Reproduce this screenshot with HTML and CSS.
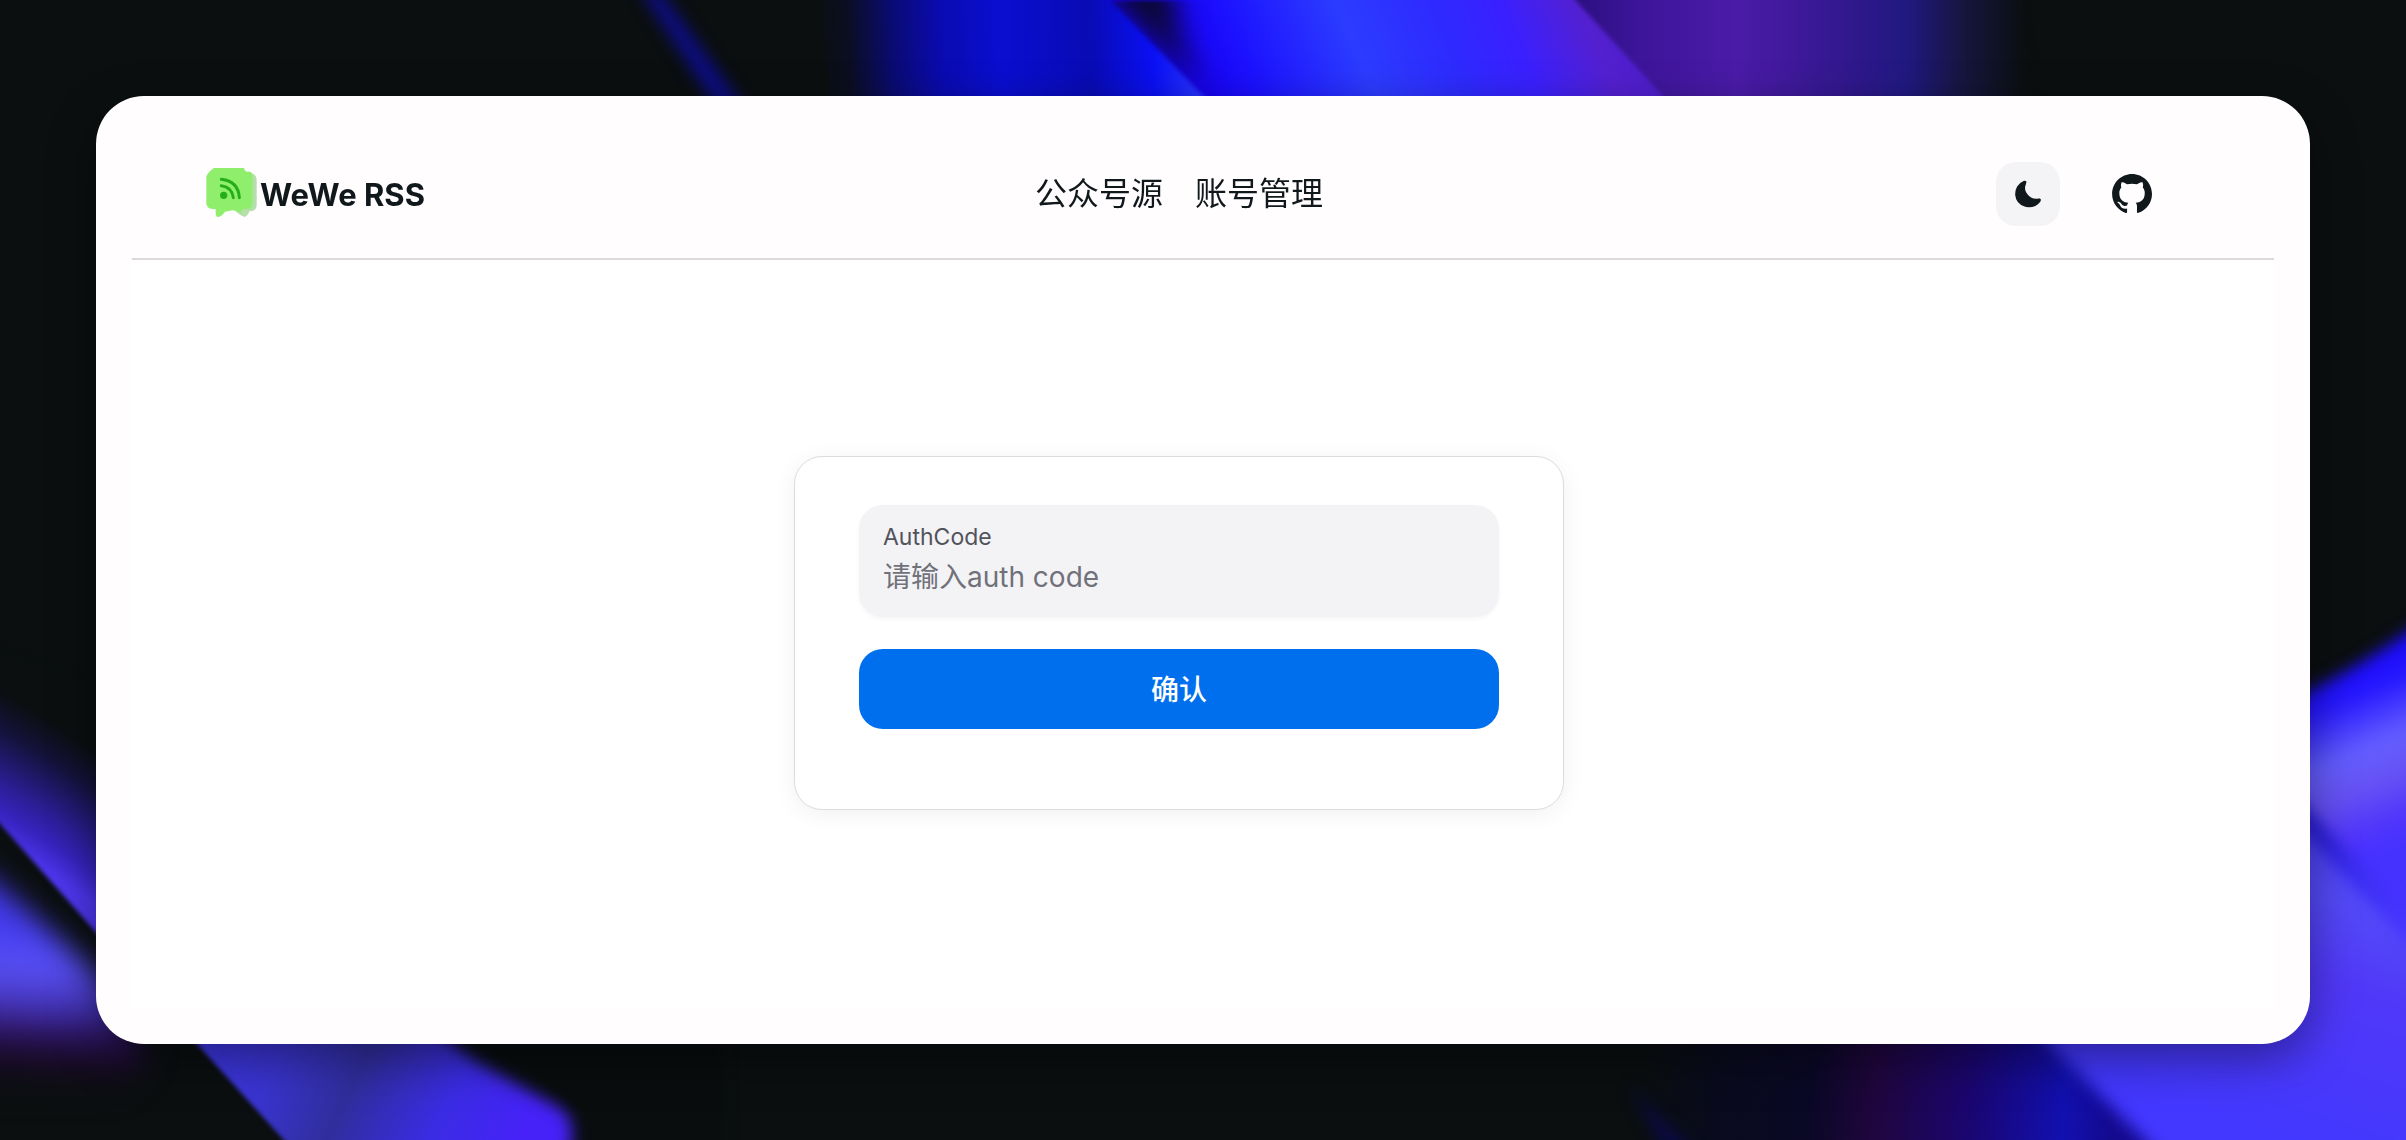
FILE: index.html
```
<!DOCTYPE html>
<html lang="zh-CN">
<head>
    <meta charset="UTF-8">
    <meta name="viewport" content="width=device-width, initial-scale=1.0">
    <title>WeWe RSS</title>
    <link rel="stylesheet" href="styles.css">
</head>
<body>

    <svg class="wallpaper" viewBox="0 0 2406 1140" preserveAspectRatio="xMidYMid slice" color-interpolation-filters="sRGB" aria-hidden="true">
        <defs>
            <filter id="soft2" x="-20%" y="-20%" width="140%" height="140%"><feGaussianBlur stdDeviation="2"/></filter>
            <filter id="soft8" x="-50%" y="-50%" width="200%" height="200%"><feGaussianBlur stdDeviation="8"/></filter>
            <filter id="soft14" x="-80%" y="-80%" width="260%" height="260%"><feGaussianBlur stdDeviation="14"/></filter>

            <linearGradient id="beamA" gradientUnits="userSpaceOnUse" x1="815" y1="20" x2="1205" y2="0">
                <stop offset="0" stop-color="#0b0f10"/>
                <stop offset="0.08" stop-color="#0b0e20"/>
                <stop offset="0.2" stop-color="#0a0b74"/>
                <stop offset="0.32" stop-color="#0a0bb0"/>
                <stop offset="0.47" stop-color="#0a0ed0"/>
                <stop offset="0.7" stop-color="#090bb4"/>
                <stop offset="0.86" stop-color="#0a10f4"/>
                <stop offset="1" stop-color="#2f3cff"/>
            </linearGradient>
            <linearGradient id="beamB" gradientUnits="userSpaceOnUse" x1="1170" y1="50" x2="1650" y2="-150">
                <stop offset="0" stop-color="#1800f0"/>
                <stop offset="0.12" stop-color="#1b10ff"/>
                <stop offset="0.33" stop-color="#2c3cff"/>
                <stop offset="0.5" stop-color="#2e2aff"/>
                <stop offset="0.62" stop-color="#3a20ff"/>
                <stop offset="0.76" stop-color="#5420d0"/>
                <stop offset="1" stop-color="#401cc8"/>
            </linearGradient>
            <linearGradient id="beamC" gradientUnits="userSpaceOnUse" x1="1575" y1="0" x2="2025" y2="0">
                <stop offset="0" stop-color="#2c0f80"/>
                <stop offset="0.14" stop-color="#3c159a"/>
                <stop offset="0.36" stop-color="#4b1ba8"/>
                <stop offset="0.58" stop-color="#341890"/>
                <stop offset="0.74" stop-color="#201980"/>
                <stop offset="0.86" stop-color="#161640"/>
                <stop offset="1" stop-color="#0b0f10"/>
            </linearGradient>
            <linearGradient id="leftUpper" gradientUnits="userSpaceOnUse" x1="80" y1="740" x2="10" y2="850">
                <stop offset="0" stop-color="#0b0f10"/>
                <stop offset="0.25" stop-color="#14123a"/>
                <stop offset="0.6" stop-color="#2a1e94"/>
                <stop offset="0.8" stop-color="#3624c0"/>
                <stop offset="1" stop-color="#4e36ee"/>
            </linearGradient>
            <linearGradient id="leftLower" gradientUnits="userSpaceOnUse" x1="30" y1="870" x2="20" y2="1085">
                <stop offset="0" stop-color="#3a30d8"/>
                <stop offset="0.28" stop-color="#463cf0"/>
                <stop offset="0.45" stop-color="#5850f4"/>
                <stop offset="0.63" stop-color="#4434b8"/>
                <stop offset="0.76" stop-color="#2a125c"/>
                <stop offset="0.88" stop-color="#180a24"/>
                <stop offset="1" stop-color="#0b0f10"/>
            </linearGradient>
            <linearGradient id="leftBottom" gradientUnits="userSpaceOnUse" x1="210" y1="1040" x2="500" y2="1180">
                <stop offset="0" stop-color="#3d36e4"/>
                <stop offset="0.22" stop-color="#3a34d0"/>
                <stop offset="0.46" stop-color="#302e9c"/>
                <stop offset="0.75" stop-color="#3a2ce4"/>
                <stop offset="1" stop-color="#4622f8"/>
            </linearGradient>
            <linearGradient id="rightUpper" gradientUnits="userSpaceOnUse" x1="2325" y1="660" x2="2400" y2="840">
                <stop offset="0" stop-color="#1806f8"/>
                <stop offset="0.22" stop-color="#2416ff"/>
                <stop offset="0.5" stop-color="#645eff"/>
                <stop offset="0.68" stop-color="#6652f4"/>
                <stop offset="0.88" stop-color="#5236fa"/>
                <stop offset="1" stop-color="#4632ff"/>
            </linearGradient>
            <linearGradient id="rightLower" gradientUnits="userSpaceOnUse" x1="2360" y1="840" x2="2260" y2="1140">
                <stop offset="0" stop-color="#4a40f0"/>
                <stop offset="0.2" stop-color="#544af8"/>
                <stop offset="0.45" stop-color="#5038f8"/>
                <stop offset="1" stop-color="#4238ff"/>
            </linearGradient>
            <linearGradient id="bottomDark" gradientUnits="userSpaceOnUse" x1="1640" y1="1100" x2="2110" y2="1130">
                <stop offset="0" stop-color="#0b0f10"/>
                <stop offset="0.15" stop-color="#090b1c"/>
                <stop offset="0.36" stop-color="#0a0826"/>
                <stop offset="0.5" stop-color="#20063e"/>
                <stop offset="0.7" stop-color="#1a0670"/>
                <stop offset="0.9" stop-color="#1210b0"/>
                <stop offset="1" stop-color="#140a90"/>
            </linearGradient>
            <linearGradient id="fold" gradientUnits="userSpaceOnUse" x1="2310" y1="820" x2="2400" y2="930">
                <stop offset="0" stop-color="#1c14c8"/>
                <stop offset="0.5" stop-color="#3a2cee"/>
                <stop offset="1" stop-color="#4636ff"/>
            </linearGradient>
            <clipPath id="clipB"><path d="M1110 0H1575L1700 136H1242Z"/></clipPath>
        </defs>

        <rect width="2406" height="1140" fill="#0b0f10"/>

        <!-- top beams -->
        <path d="M640 -10L660 -10L750 116L722 116Z" fill="#0d0d84" filter="url(#soft8)"/>
        <path d="M815 -20H1400V140H835Z" fill="url(#beamA)"/>
        <g filter="url(#soft2)">
            <path d="M1091 -20H1700L1800 136H1242Z" fill="url(#beamB)"/>
            <g clip-path="url(#clipB)">
                <path d="M1080 -30H1170L1180 40L1205 90Z" fill="#0b0830" filter="url(#soft14)"/>
            </g>
            <path d="M1557 -20H2025L2040 140H1703Z" fill="url(#beamC)"/>
        </g>

        <!-- left beams -->
        <path d="M-20 640L140 700V982L0 824L-20 802Z" fill="url(#leftUpper)" filter="url(#soft2)"/>
        <path d="M-60 840L0 885L100 975L150 1060L120 1090H-60Z" fill="url(#leftLower)" filter="url(#soft14)"/>
        <path d="M150 992L440 1000L700 1200H338Z" fill="url(#leftBottom)" filter="url(#soft2)"/>
        <path d="M400 1000L470 1058L560 1108Q582 1124 564 1170H720V1000Z" fill="#090d0e" filter="url(#soft8)"/>

        <!-- right beams -->
        <path d="M1640 1030H2200V1160H1640Z" fill="url(#bottomDark)"/>
        <path d="M1630 1085L1700 1160H1670Z" fill="#0a0a48" filter="url(#soft8)"/>
        <path d="M2270 716L2310 690Q2370 661 2430 616V1000H2270Z" fill="url(#rightUpper)" filter="url(#soft8)"/>
        <path d="M2270 790L2310 832L2440 966V1190H2188L2145 1140L2050 1044L2000 980L2270 980Z" fill="url(#rightLower)" filter="url(#soft8)"/>
        <path d="M2290 802L2320 836L2430 950" fill="none" stroke="url(#fold)" stroke-width="16" filter="url(#soft8)"/>
    </svg>

    <div class="window">
        <header class="header">
            <a class="brand" href="#">
                <svg class="logo" viewBox="36 51 168 168" aria-hidden="true">
                    <path d="M176 66L190 75Q200 80 200 94V168Q200 183 186 186L178 187Q174 200 164 204Q148 198 136 186Z" fill="#b4dfaa"/>
                    <path d="M72 57H162Q163 66 172 68L182 70Q187 74 187 84V164Q186 178 172 180L156 181Q155 189 151 193Q136 181 120 185L105 188Q94 204 82 204Q76 201 77 180H68Q49 179 49 162V84Q52 70 72 57Z" fill="#8fee6c"/>
                    <g fill="none" stroke="#25ae19" stroke-width="9" stroke-linecap="round">
                        <path d="M94 91Q145 97 148 146"/>
                        <path d="M94 110Q126 114 130 146"/>
                    </g>
                    <circle cx="101" cy="139" r="11" fill="#25ae19"/>
                </svg>
                <span>WeWe RSS</span>
            </a>
            <nav class="nav">
                <a href="#">公众号源</a>
                <a href="#">账号管理</a>
            </nav>
            <div class="actions">
                <button class="theme-toggle" type="button" aria-label="Dark mode">
                    <svg viewBox="0 0 24 24" aria-hidden="true">
                        <path d="M21.53 15.93c-.16-.27-.61-.69-1.73-.49a8.46 8.46 0 01-1.88.13 8.409 8.409 0 01-5.91-2.82 8.068 8.068 0 01-1.44-8.66c.44-1.01.13-1.54-.09-1.76s-.77-.55-1.83-.11a10.318 10.318 0 00-6.32 10.21 10.475 10.475 0 007.04 8.99 10 10 0 002.89.55c.16.01.32.02.48.02a10.5 10.5 0 008.47-4.27c.67-.93.49-1.519.32-1.79z"/>
                    </svg>
                </button>
                <a class="github" href="#" aria-label="GitHub">
                    <svg viewBox="0 0 24 24" aria-hidden="true">
                        <path d="M12.026 2c-5.509 0-9.974 4.465-9.974 9.974 0 4.406 2.857 8.145 6.821 9.465.499.09.679-.217.679-.481 0-.237-.008-.865-.011-1.696-2.775.602-3.361-1.338-3.361-1.338-.452-1.152-1.107-1.459-1.107-1.459-.905-.619.069-.605.069-.605 1.002.07 1.527 1.028 1.527 1.028.89 1.524 2.336 1.084 2.902.829.091-.645.351-1.085.635-1.334-2.214-.251-4.542-1.107-4.542-4.93 0-1.087.389-1.979 1.024-2.675-.101-.253-.446-1.268.099-2.64 0 0 .837-.269 2.742 1.021a9.582 9.582 0 0 1 2.496-.336 9.554 9.554 0 0 1 2.496.336c1.906-1.291 2.742-1.021 2.742-1.021.545 1.372.203 2.387.099 2.64.64.696 1.024 1.587 1.024 2.675 0 3.833-2.33 4.675-4.552 4.922.355.308.675.916.675 1.846 0 1.334-.012 2.41-.012 2.737 0 .267.178.577.687.479C19.146 20.115 22 16.379 22 11.974 22 6.465 17.535 2 12.026 2z"/>
                    </svg>
                </a>
            </div>
        </header>

        <main class="content">
            <form class="card">
                <div class="field">
                    <label for="authCode">AuthCode</label>
                    <input type="text" id="authCode" placeholder="请输入auth code">
                </div>
                <button class="submit" type="button">确认</button>
            </form>
        </main>
    </div>

</body>
</html>
```
FILE: styles.css
```
* {
    box-sizing: border-box;
}

body {
    font-family: Inter, 'Noto Sans CJK SC', sans-serif;
    background-color: #0b0f10;
    color: #11181c;
    display: flex;
    min-height: 100vh;
    margin: 0;
    padding: 96px;
}

a {
    color: inherit;
    text-decoration: none;
}

.wallpaper {
    position: fixed;
    inset: 0;
    width: 100%;
    height: 100%;
}

.window {
    position: relative;
    flex: 1;
    display: flex;
    flex-direction: column;
    padding: 36px;
    background-color: #fffdfe;
    border-radius: 48px;
    box-shadow: 0 16px 48px rgba(0, 0, 0, 0.4);
}

.header {
    display: grid;
    grid-template-columns: 1fr auto 1fr;
    align-items: center;
    height: 128px;
    padding: 0 118px 2px 70px;
    border-bottom: 2px solid #dcd9dc;
}

.brand {
    display: flex;
    align-items: center;
    gap: 2px;
    font-size: 31px;
    font-weight: 700;
}

.logo {
    width: 56px;
    height: 56px;
}

.nav {
    display: flex;
    gap: 32px;
    font-size: 32px;
    line-height: 40px;
}

.actions {
    display: flex;
    justify-content: flex-end;
    align-items: center;
    gap: 48px;
}

.actions svg {
    display: block;
    fill: currentColor;
}

.theme-toggle {
    display: flex;
    justify-content: center;
    align-items: center;
    width: 64px;
    height: 64px;
    padding: 0;
    border: none;
    border-radius: 20px;
    background-color: #f4f4f6;
    color: inherit;
    cursor: pointer;
}

.theme-toggle svg {
    width: 32px;
    height: 32px;
}

.github svg {
    width: 48px;
    height: 48px;
}

.content {
    flex: 1;
    display: flex;
    justify-content: center;
    align-items: center;
    padding: 0 48px 2px 0;
    background-color: #fff;
}

.card {
    display: flex;
    flex-direction: column;
    gap: 32px;
    width: 770px;
    padding: 48px 64px 80px;
    border: 1px solid #dcdcde;
    border-radius: 28px;
    background-color: #fff;
    box-shadow: 0 4px 24px rgba(0, 0, 0, 0.06);
}

.field {
    display: flex;
    flex-direction: column;
    height: 112px;
    padding: 16px 24px;
    border-radius: 24px;
    background-color: #f3f3f6;
    box-shadow: 0 2px 4px rgba(0, 0, 0, 0.04);
}

.field label {
    font-size: 23px;
    line-height: 32px;
    color: #52525b;
}

.field input {
    width: 100%;
    height: 48px;
    padding: 0;
    border: none;
    outline: none;
    background: transparent;
    font-family: inherit;
    font-size: 28px;
    color: #11181c;
}

.field input::placeholder {
    color: #71717a;
    opacity: 1;
}

.submit {
    height: 80px;
    padding: 0 0 2px;
    border: none;
    border-radius: 24px;
    background-color: #006fee;
    color: #fff;
    font-family: inherit;
    font-size: 28px;
    font-weight: 500;
    cursor: pointer;
}
```
